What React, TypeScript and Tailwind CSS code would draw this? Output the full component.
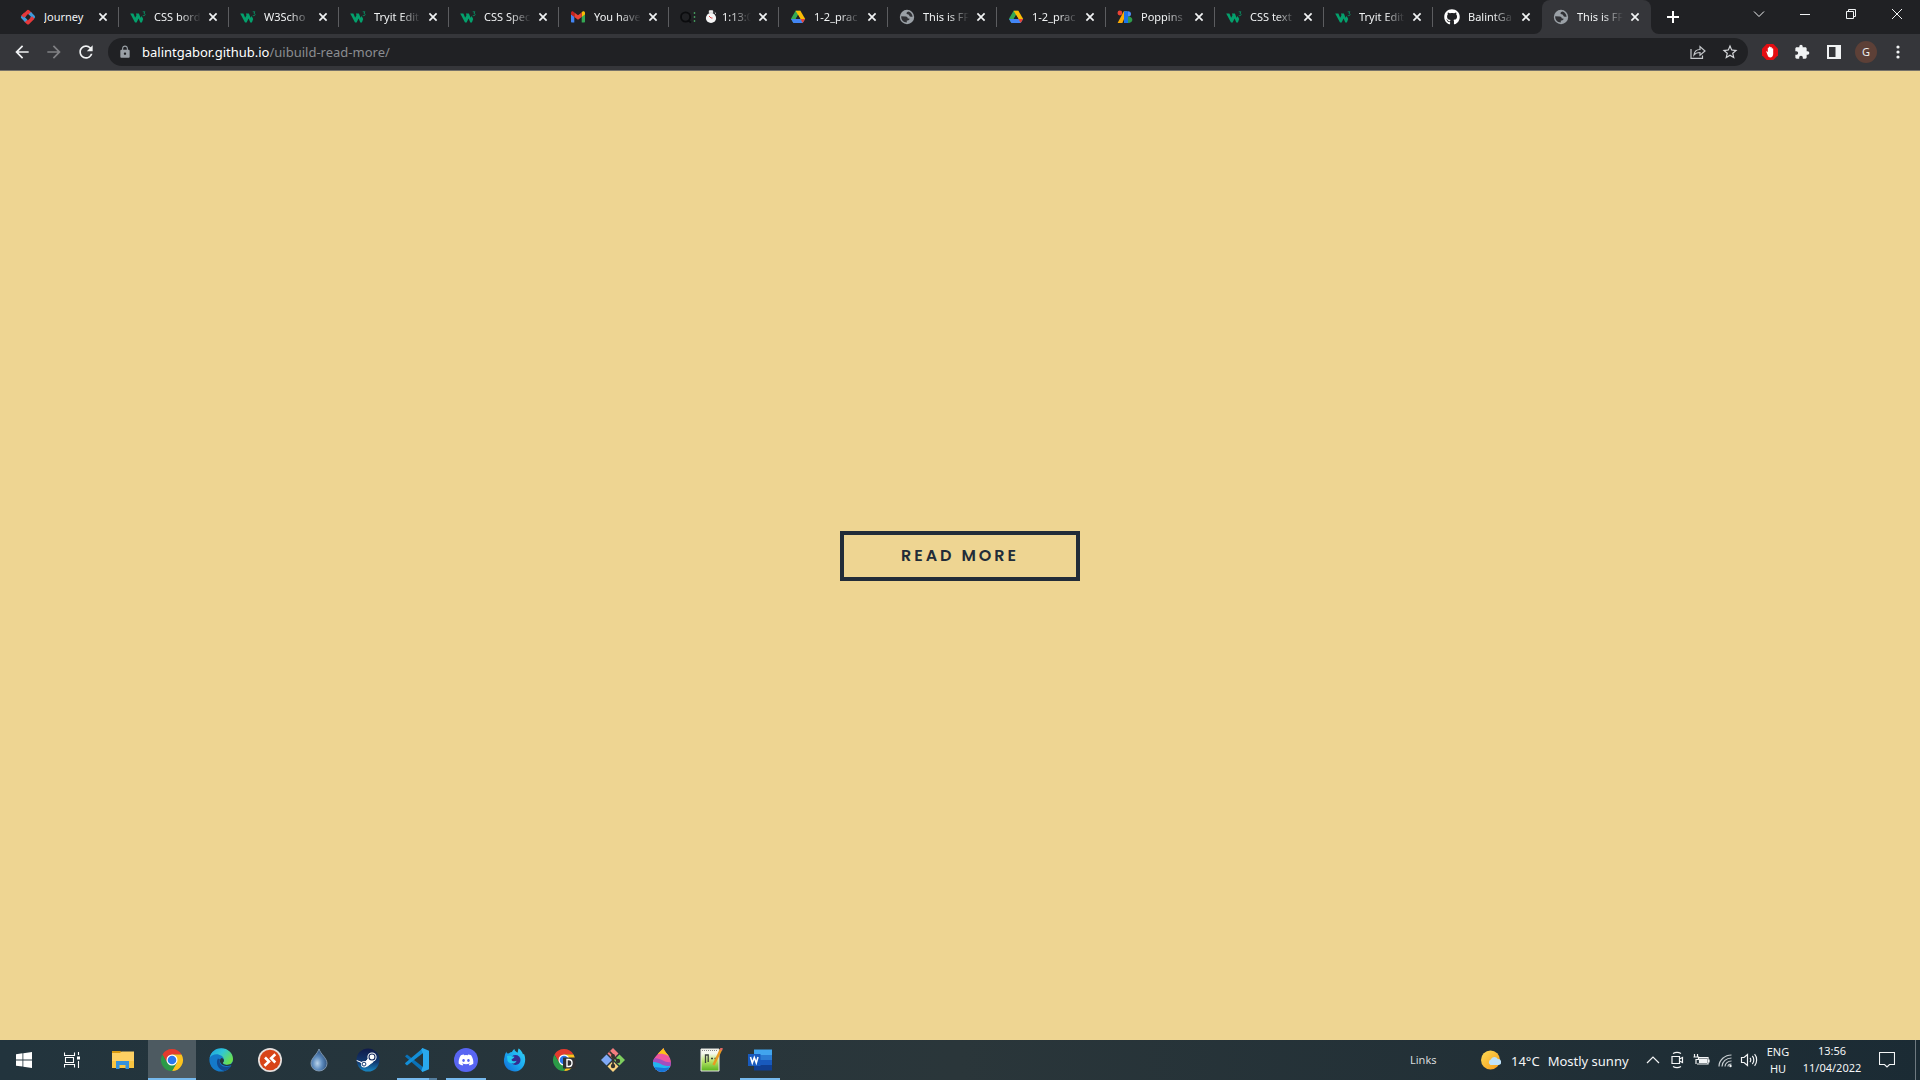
import type { ReactNode } from 'react';
import { FaDiscord, FaGithub } from 'react-icons/fa';
import { MdArrowBack, MdArrowForward, MdExtension, MdLock, MdRefresh, MdStarOutline } from 'react-icons/md';

const W3 = () => (
  <svg viewBox="0 0 16 16" className="h-4 w-4">
    <path d="M.2 4.4h3.2l1.8 4.4 1.3-2.6-.6-1.8h3l1.7 4.4 1.1-1.7 1.5 3-1.3 3.3h-1.6L8.6 9.5l-2 3.9H5z" fill="#04a06c" />
    <path d="M12.7 2.8h2.3l-1.1 1.5c1.7.2 1.6 2.4-.1 2.4-.6 0-1-.2-1.2-.6" fill="none" stroke="#0a8a60" strokeWidth=".9" />
  </svg>
);

const Journey = () => (
  <svg viewBox="0 0 16 16" className="h-4 w-4" fill="none" strokeWidth="3.4" strokeLinejoin="round">
    <path d="M2.6 8 8 2.600l2.600 2.400" stroke="#e5383b" />
    <path d="M9.800 4.100l3.600 3.800-2 2" stroke="#3c9bdc" />
    <path d="M13.300 8.500 8 13.800l-2.600-2.400" stroke="#e5383b" />
    <path d="M6.200 11.900 2.600 8.100l2-2" stroke="#3c9bdc" />
    <path d="M2.600 7.600 5.500 4.700" stroke="#e5383b" />
  </svg>
);

const Gmail = () => (
  <svg viewBox="0 0 16 16" className="h-4 w-4">
    <path d="M1 4v8.6c0 .6.4 1 1 1h2.3V7.4L1 4.9z" fill="#4285f4" />
    <path d="M15 4v8.6c0 .6-.4 1-1 1h-2.3V7.4L15 4.9z" fill="#34a853" />
    <path d="M11.7 3.6V8L15 5.5V4c0-1.5-1.6-2.2-2.7-1.3z" fill="#fbbc04" />
    <path d="M4.3 8V3.4L8 6.2l3.7-2.8V8L8 10.8z" fill="#ea4335" />
    <path d="M1 4v1.5L4.3 8V3.4l-.9-.7C2.4 1.8 1 2.6 1 4z" fill="#c5221f" />
  </svg>
);

const Timer = () => (
  <svg viewBox="0 0 16 16" className="h-4 w-4">
    <circle cx="5.6" cy="8" r="4.6" fill="none" stroke="#0b0c0e" strokeWidth="1.8" />
    <path d="M8 11.5l3 2" stroke="#0b0c0e" strokeWidth="1.6" />
    <path d="M14.5 3v2M14.5 7v2M14.5 11v2" stroke="#43945a" strokeWidth="1.4" />
  </svg>
);

const Stopwatch = () => (
  <svg viewBox="0 0 14 14" className="h-3.5 w-3.5 shrink-0">
    <path d="M5.3.8h3.4v2H5.3zM10.8 2.5l1.2 1.2" fill="#eee" stroke="#eee" />
    <circle cx="7" cy="8" r="5.1" fill="#f5f5f5" />
    <path d="M7 8 5 6M7 8h1.5" stroke="#d33" strokeWidth=".9" />
  </svg>
);

const Drive = () => (
  <svg viewBox="0 0 16 16" className="h-4 w-4">
    <path d="M5.6 1.8h4.8L8 6 3.4 14 1 9.8z" fill="#34a853" />
    <path d="M5.6 1.8h4.8l4.8 8.2h-4.7z" fill="#fbbc04" />
    <path d="M3.4 14 1 9.9h14.1L12.7 14z" fill="#4285f4" />
    <path d="M12.7 14 15.1 9.9h-4.7z" fill="#ea4335" />
    <path d="M8 6.2 5.8 9.9h4.4z" fill="#202124" />
  </svg>
);

const GoogleFonts = () => (
  <svg viewBox="0 0 16 16" className="h-4 w-4">
    <circle cx="2.9" cy="4" r="2.4" fill="#ea4335" />
    <path d="M.6 14 6.8 2.2h3.4L5.4 14z" fill="#fbab05" />
    <path d="M7 2.2h4V14H7z" fill="#1a73e8" />
    <path d="M11 2.2c4 0 4 5.6 0 5.6z" fill="#4e8df5" />
    <path d="M11 7.4c5.8 0 5.8 6.6 0 6.6z" fill="#2f9c4c" />
  </svg>
);

const Globe = () => (
  <svg viewBox="0 0 16 16" className="h-4 w-4">
    <circle cx="8" cy="8" r="7.200" fill="#9aa0a6" />
    <path d="M2.200 7.300l4.600.2c1.400.1 2 1 2 2h1.600c.4 1.400-1 2-2.600 2.100v1.900c-3.400 0-5.800-2.700-5.600-6.200z" fill="#303135" />
    <path d="M9.500 2.400c-2 .6-2.400 1.700-1.600 2.600 1 .4 2 .2 2.400 1.400.3 1.400 1.900 1.500 3.300 1.300-.2-2.500-1.700-4.500-4.100-5.300z" fill="#303135" />
  </svg>
);
const Github = () => <FaGithub className="h-4 w-4 text-white" />;

const Cross = () => (
  <svg viewBox="0 0 10 10" className="h-2.5 w-2.5">
    <path d="M1.4 1.4l7.2 7.2M8.6 1.4L1.4 8.6" stroke="#f1f3f4" strokeWidth="1.7" />
  </svg>
);

type TabData = { title: string; icon: ReactNode; wide?: boolean; timer?: boolean; active?: boolean };

const tabs: TabData[] = [
  { title: 'Journey', icon: <Journey />, wide: true },
  { title: 'CSS bord', icon: <W3 />, wide: true },
  { title: 'W3Scho', icon: <W3 />, wide: true },
  { title: 'Tryit Edit', icon: <W3 />, wide: true },
  { title: 'CSS Spec', icon: <W3 />, wide: true },
  { title: 'You have', icon: <Gmail />, wide: true },
  { title: '1:13:0', icon: <Timer />, wide: true, timer: true },
  { title: '1-2_prac', icon: <Drive /> },
  { title: 'This is FF', icon: <Globe /> },
  { title: '1-2_prac', icon: <Drive /> },
  { title: 'Poppins', icon: <GoogleFonts /> },
  { title: 'CSS text', icon: <W3 /> },
  { title: 'Tryit Edit', icon: <W3 /> },
  { title: 'BalintGa', icon: <Github /> },
  { title: 'This is FF', icon: <Globe />, active: true },
];

const Flare = ({ side }: { side: 'left' | 'right' }) => (
  <svg viewBox="0 0 8 8" className={side === 'left' ? 'absolute bottom-0 -left-2 h-2 w-2' : 'absolute -right-2 bottom-0 h-2 w-2'}>
    <path d={side === 'left' ? 'M8 0v8H0a8 8 0 0 0 8-8z' : 'M0 0v8h8a8 8 0 0 1-8-8z'} fill="#35363a" />
  </svg>
);

const Tab = ({ tab, last }: { tab: TabData; last: boolean }) => (
  <div
    className={`relative flex h-full items-center pl-[11px] ${tab.wide ? 'w-[110px]' : 'w-[109px]'} ${tab.active ? 'rounded-t-lg bg-[#35363a]' : ''}`}
  >
    {tab.active && <Flare side="left" />}
    <button className="flex min-w-0 flex-1 items-center gap-2 text-left">
      <span className="shrink-0">{tab.icon}</span>
      <span
        className={`flex min-w-0 flex-1 items-center gap-1 overflow-hidden text-[11px] leading-4 whitespace-nowrap text-[#f1f3f4] ${
          tab.title === 'Journey' ? '' : '[mask-image:linear-gradient(to_right,black_55%,transparent)]'
        }`}
      >
        {tab.timer && <Stopwatch />}
        {tab.title}
      </span>
    </button>
    <button
      aria-label={`Close ${tab.title}`}
      className={`ml-1 flex h-4 w-4 shrink-0 items-center justify-center ${tab.active || last ? 'mr-2' : 'mr-[7px]'}`}
    >
      <Cross />
    </button>
    {!tab.active && !last && <span className="h-5 w-px shrink-0 bg-[#5c5d60]" />}
    {tab.active && <Flare side="right" />}
  </div>
);

const WindowButton = ({ label, d }: { label: string; d: string }) => (
  <button aria-label={label} className="flex h-7 w-[46px] items-center justify-center">
    <svg viewBox="0 0 12 12" className="h-3 w-3" fill="none" stroke="#f1f3f4">
      <path d={d} />
    </svg>
  </button>
);

const ToolButton = ({ label, children }: { label: string; children: ReactNode }) => (
  <button aria-label={label} className="flex h-7 w-8 items-center justify-center text-[#f1f3f4]">
    {children}
  </button>
);

const Toolbar = () => (
  <div className="flex h-[37px] items-center gap-1.5 border-b border-[#77736a] bg-[#35363a] px-1.5">
    <nav className="flex" aria-label="Navigation">
      <ToolButton label="Back"><MdArrowBack className="h-5 w-5" /></ToolButton>
      <ToolButton label="Forward"><MdArrowForward className="h-5 w-5 text-[#808184]" /></ToolButton>
      <ToolButton label="Reload"><MdRefresh className="h-5 w-5" /></ToolButton>
    </nav>
    <div className="flex h-7 flex-1 items-center rounded-full bg-[#202124] pr-0.5 pl-2.5">
      <MdLock className="mr-2.5 h-3.5 w-3.5 text-[#9aa0a6]" />
      <a href="#address" className="flex-1 text-[13px] leading-5 text-[#8b8d91]">
        <span className="text-white">balintgabor.github.io</span>/uibuild-read-more/
      </a>
      <ToolButton label="Share">
        <svg viewBox="0 0 16 16" className="h-4 w-4" fill="none" stroke="#c4c7ca" strokeWidth="1.2">
          <path d="M1 5v9.4h11.5v-3M4 11c.4-3.8 2.600-5.500 6-5.500V2.500L15 7l-5 4.300V8.500C7.500 8.500 5.500 9 4 11z" />
        </svg>
      </ToolButton>
      <ToolButton label="Bookmark"><MdStarOutline className="h-[18px] w-[18px] text-[#d5d7da]" /></ToolButton>
    </div>
    <div className="flex">
      <ToolButton label="AdBlock">
        <svg viewBox="0 0 16 16" className="h-4 w-4">
          <path d="M4.700 0h6.600L16 4.700v6.600L11.300 16H4.700L0 11.300V4.700z" fill="#e40d12" />
          <path d="M4.200 7.500c.7-.6 1.300.6 1.600 1V4c0-.8 1.100-.8 1.200 0V3c0-.8 1.300-.8 1.400 0v.6c0-.8 1.300-.8 1.400 0v1.200c0-.8 1.300-.8 1.400 0V10c0 2-1.200 3.400-3 3.400-2.300 0-2.600-2.500-4-5.900z" fill="#fff" />
        </svg>
      </ToolButton>
      <ToolButton label="Extensions"><MdExtension className="h-4 w-4" /></ToolButton>
      <ToolButton label="Side panel">
        <svg viewBox="0 0 14 14" className="h-3.5 w-3.5">
          <path d="M0 0h14v14H0zM2 2v10h6.500V2z" fill="#f1f3f4" fillRule="evenodd" />
        </svg>
      </ToolButton>
      <ToolButton label="Profile">
        <span className="flex h-[22px] w-[22px] items-center justify-center rounded-full bg-[#5d4037] text-[11px] text-[#eee]">G</span>
      </ToolButton>
      <ToolButton label="Menu">
        <svg viewBox="0 0 4 14" className="h-3.5 w-1" fill="#f1f3f4">
          <circle cx="2" cy="2" r="1.600" /><circle cx="2" cy="7" r="1.600" /><circle cx="2" cy="12" r="1.600" />
        </svg>
      </ToolButton>
    </div>
  </div>
);

const Chrome = () => (
  <>
    <path d="M2.470 6.500A11 11 0 0 1 21.530 6.500H12L7.240 14.750z" fill="#e33b2e" />
    <path d="M21.530 6.500A11 11 0 0 1 12 23l4.760-8.250L12 6.500z" fill="#fcc31e" />
    <path d="M12 23A11 11 0 0 1 2.470 6.500l4.770 8.250h9.520z" fill="#2b9a47" />
    <circle cx="12" cy="12" r="5.500" fill="#fff" />
    <circle cx="12" cy="12" r="4.300" fill="#2a78ee" />
  </>
);

type AppEntry = { name: string; art: ReactNode; state?: 'active' | 'open' | 'multi' };

const apps: AppEntry[] = [
  {
    name: 'File Explorer',
    art: (
      <>
        <path d="M1 3h8.500l1.500 2H1z" fill="#d99a10" />
        <path d="M1 5h8l1.500-1.500H23V20H1z" fill="#fdd063" />
        <path d="M1 13h22v7H1z" fill="#f9c440" />
        <path d="M5 13h13v8h-3.500v-4h-6v4H5z" fill="#3391dd" />
      </>
    ),
  },
  { name: 'Chrome', art: <Chrome />, state: 'active' },
  {
    name: 'Edge',
    art: (
      <>
        <defs>
          <linearGradient id="edgeTop" x1="0" y1="0" x2="1" y2=".6">
            <stop offset="0" stopColor="#1ba0e0" /><stop offset=".5" stopColor="#30c6d6" /><stop offset="1" stopColor="#6be04b" />
          </linearGradient>
        </defs>
        <circle cx="12" cy="12" r="11.600" fill="#1479c9" />
        <path d="M.6 10C2 3.500 7 .3 12.300.3 19 .3 24 5.300 24 11c0 3.500-2.500 5.800-5.800 5.800-2.600 0-4.300-.9-4.300-2 0-.7 1-1 1-2.800C14.900 8.500 11 6.300 7.500 6.300 4.500 6.300 2 7.600.6 10z" fill="url(#edgeTop)" />
        <path d="M9 10.500c-2.600 3.500-.5 11.500 6.500 12.500 3.400-.9 5.400-2.800 6.800-5.200-4 2.200-11.700 1.300-11.700-4.300 0-1.200.5-2 .5-2z" fill="#12498f" />
        <path d="M23.800 16.500c-3 2.500-12.900 2-12.900-3.800 0-1.500 1.300-2.600 2-2.700 1.600.6 2.200 1.500 2 3-.1 1-1 1.300-1 2 0 1.300 3 2.500 6 1.600 2-.5 3.500-1.600 4.200-2.600z" fill="#24343c" />
      </>
    ),
  },
  {
    name: 'Remote Desktop',
    art: (
      <>
        <circle cx="12" cy="12" r="12" fill="#e6e1df" />
        <circle cx="12" cy="12" r="10.300" fill="#d84417" />
        <path d="M7 9.500l4 4-4.500 4.300M17.300 14.500l-4.200-4.300 4.200-4" fill="none" stroke="#fff" strokeWidth="2.600" />
      </>
    ),
  },
  {
    name: 'Deluge',
    art: (
      <>
        <defs>
          <radialGradient id="drop" cx=".4" cy=".65" r=".6">
            <stop offset="0" stopColor="#b9d3ea" /><stop offset=".5" stopColor="#5d8bbd" /><stop offset="1" stopColor="#2e527f" />
          </radialGradient>
        </defs>
        <path d="M12 1c1.500 5 8 9 8 14.500a8 7.500 0 0 1-16 0C4 10 10.500 6 12 1z" fill="url(#drop)" stroke="#8fa6bd" strokeWidth=".8" />
      </>
    ),
  },
  {
    name: 'Steam',
    art: (
      <>
        <defs>
          <linearGradient id="steam" x1="0" y1="0" x2="0" y2="1">
            <stop offset="0" stopColor="#101a4a" /><stop offset=".6" stopColor="#123a70" /><stop offset="1" stopColor="#1888c4" />
          </linearGradient>
        </defs>
        <circle cx="12" cy="12" r="11.500" fill="url(#steam)" />
        <path d="M.7 12.500l7.500 3 5-6 4 4.200-6 4.500" fill="#fff" stroke="#fff" />
        <circle cx="8.300" cy="16.300" r="3.300" fill="#fff" />
        <circle cx="8" cy="16.100" r="1.900" fill="none" stroke="#143b70" />
        <circle cx="16" cy="9" r="4.600" fill="#fff" />
        <circle cx="16" cy="9" r="3" fill="#fff" stroke="#15295c" strokeWidth="1.100" />
      </>
    ),
  },
  {
    name: 'Visual Studio Code',
    state: 'multi',
    art: (
      <>
        <path d="M0 8.300l2-1.800L18 19v5L1 9.300z" fill="#0a72b8" />
        <path d="M0 15.700l2 1.800L18 5V0L.5 14.700z" fill="#138fd8" />
        <path d="M17.500 0L24 2.800v18.400L17.500 24l-1.200-1.200L18 18V6l-1.700-4.800z" fill="#29a9ee" />
      </>
    ),
  },
  {
    name: 'Discord',
    state: 'open',
    art: (
      <>
        <circle cx="12" cy="12" r="12" fill="#5865f2" />
        <FaDiscord x="4" y="4" width="16" height="16" color="#fff" />
      </>
    ),
  },
  {
    name: 'Firefox Developer Edition',
    art: (
      <>
        <defs>
          <linearGradient id="fox" x1="1" y1="0" x2="0" y2="1">
            <stop offset="0" stopColor="#35d6f5" /><stop offset=".5" stopColor="#1aa7f0" /><stop offset="1" stopColor="#1169d5" />
          </linearGradient>
        </defs>
        <path d="M3.500 3.500c0 2 .7 2.200 2.500 1.800C7 4.500 8 4 9 4c.5-1.500 1.500-2.500 2.500-3 0 1.800 1 2.500 3 3.700C15 3.500 15 1.500 15.500.5 17 1 19.500 4 20 6.500l1-.8C24.500 14 20 23.500 12 23.500 5 23.500-1 17 1.500 9c.3-2 1-4 2-5.500z" fill="url(#fox)" />
        <circle cx="12.500" cy="12" r="5" fill="#342b91" />
        <path d="M4 8c3-.5 5 .5 7.500.8-.5 1.800-2.600 1.600-3 3 .6 1.800 3 1.900 5 .9-.5 3.500-7 4-9 .100z" fill="#22c8ef" />
      </>
    ),
  },
  {
    name: 'Chrome profile D',
    art: (
      <>
        <Chrome />
        <rect x="11" y="9.500" width="12.500" height="11" fill="#303134" />
        <path d="M15 11.500h1.800c4.300 0 4.300 7 0 7H15z" fill="none" stroke="#fff" strokeWidth="1.400" />
      </>
    ),
  },
  {
    name: 'Git',
    art: (
      <>
        <path d="M12 0l5.500 5.500L12 11 6.500 5.500z" fill="#f47d7f" />
        <path d="M18.500 6.500L24 12l-5.500 5.500L13 12z" fill="#7fcf5f" />
        <path d="M5.500 6.500L11 12l-5.500 5.500L0 12z" fill="#7fa9f5" />
        <path d="M12 13l5.500 5.500L12 24l-5.500-5.500z" fill="#fbd481" />
        <path d="M8.500 3.500L12 7v11M12 8l4.500 4.500" fill="none" stroke="#34332f" strokeWidth="1.700" />
        <circle cx="12" cy="8" r="2" fill="#34332f" /><circle cx="12" cy="18" r="2.200" fill="#34332f" /><circle cx="17" cy="13" r="2.200" fill="#34332f" />
      </>
    ),
  },
  {
    name: 'Paint 3D',
    art: (
      <>
        <defs>
          <clipPath id="paint"><path d="M13.500 0c1 4.500 7.500 8 7.500 15a9 9 0 0 1-18 0C3 9 9.500 5 13.500 0z" /></clipPath>
        </defs>
        <g clipPath="url(#paint)">
          <path d="M0 0h24v24H0z" fill="#f0569f" />
          <path d="M8 0h14v9c-4 0-6-4-14-3z" fill="#fcc319" />
          <path d="M2 11c8-3 12 5 20 3v10H2z" fill="#a04fc0" />
          <path d="M2 14c8-1 9 5 20 4v7H2z" fill="#21b6f0" />
          <path d="M2 19c8 0 9 2 20 0v5H2z" fill="#1776d8" />
        </g>
      </>
    ),
  },
  {
    name: 'Notepad++',
    art: (
      <>
        <defs>
          <linearGradient id="note" x1="0" y1="0" x2="0" y2="1">
            <stop offset=".2" stopColor="#f6f8ef" /><stop offset=".55" stopColor="#b9e46a" /><stop offset="1" stopColor="#58b31b" />
          </linearGradient>
        </defs>
        <path d="M2 1h18v22H2z" fill="url(#note)" stroke="#e5e5e0" />
        <path d="M3 2.500h16" stroke="#888" strokeDasharray="1 1" />
        <path d="M6.500 15V7h2.700v7M12 10.500h2M15.500 10.500h2" fill="none" stroke="#3a423a" strokeWidth="1.300" />
        <path d="M22 1.500L14.500 17" stroke="#e99a21" strokeWidth="2.600" />
        <path d="M22.800 0l-1 2.300" stroke="#e36b62" strokeWidth="2.600" />
      </>
    ),
  },
  {
    name: 'Word',
    state: 'open',
    art: (
      <>
        <path d="M6 1.500h18V7H6z" fill="#41a5ee" />
        <path d="M6 7h18v5H6z" fill="#2b7cd3" />
        <path d="M6 12h18v5H6z" fill="#185abd" />
        <path d="M6 17h18v5.500H6z" fill="#103f91" />
        <path d="M0 6h12.500v12H0z" fill="#185abd" />
        <path d="M2.500 9l1.800 6 2-5.500 2 5.500L10 9" fill="none" stroke="#fff" strokeWidth="1.500" />
      </>
    ),
  },
];

const TaskButton = ({ app }: { app: AppEntry }) => (
  <button aria-label={app.name} className={`flex h-10 w-12 flex-col items-center ${app.state === 'active' ? 'bg-[#4d5a61]' : ''}`}>
    <span className="flex flex-1 items-center pt-0.5">
      <svg viewBox="0 0 24 24" className="h-6 w-6">{app.art}</svg>
    </span>
    <span className={`flex h-0.5 ${app.state === 'active' ? 'w-12' : 'w-10'} ${app.state ? 'bg-[#76b9ed]' : ''}`}>
      {app.state === 'multi' && <span className="ml-auto h-full w-2 bg-[#557f9f]" />}
    </span>
  </button>
);

const TrayIcon = ({ label, children }: { label: string; children: ReactNode }) => (
  <button aria-label={label} className="flex w-6 items-center justify-center">
    <svg viewBox="0 0 18 18" className="h-[18px] w-[18px]" fill="none" stroke="#f3f5f6" strokeWidth="1.200">{children}</svg>
  </button>
);

const Taskbar = () => (
  <footer className="flex h-10 bg-linear-to-r from-[#22343d] via-[#2a363a] via-50% to-[#1b2b34] text-[#f3f5f6]">
    <button aria-label="Start" className="flex w-12 items-center justify-center">
      <svg viewBox="0 0 16 16" className="h-4 w-4" fill="#fff">
        <path d="M0 2.200l6.500-.9v6.200H0zM7.300 1.200L16 0v7.500H7.300zM0 8.400h6.500v6.200L0 13.700zM7.300 8.400H16V16l-8.700-1.200z" />
      </svg>
    </button>
    <button aria-label="Task view" className="mr-[3px] flex w-12 items-center justify-center">
      <svg viewBox="0 0 16 16" className="h-4 w-4" fill="none" stroke="#fff" strokeWidth="1.100">
        <path d="M.5.500v3h10v-3M.5 15.500v-3h10v3M1.500 5.500h8v5h-8zM14.500 0v3M14.500 9v7" />
        <path d="M13 4.500h3v3h-3z" fill="#fff" stroke="none" />
      </svg>
    </button>
    <div className="flex gap-px">
      {apps.map((app) => <TaskButton key={app.name} app={app} />)}
    </div>
    <div className="ml-auto flex">
      <button className="w-[71px] text-left text-[11px] text-[#d7dadb]">Links</button>
      <button className="flex w-40 items-center gap-2.5 text-[13px] leading-5 whitespace-nowrap">
        <svg viewBox="0 0 20 20" className="h-5 w-5 shrink-0">
          <defs>
            <linearGradient id="sun" x1="0" y1="0" x2="1" y2="1"><stop stopColor="#fddc57" /><stop offset="1" stopColor="#f79a18" /></linearGradient>
          </defs>
          <circle cx="9.500" cy="10" r="9.500" fill="url(#sun)" />
          <path d="M9.500 15a3 3 0 0 1 .3-5.500 3.800 3.800 0 0 1 7-.5 3 3 0 0 1 .7 6z" fill="#bfe2fa" />
        </svg>
        <span className="flex gap-2 pt-0.5"><span>14°C</span><span>Mostly sunny</span></span>
      </button>
      <TrayIcon label="Show hidden icons"><path d="M3 12l6-6 6 6" /></TrayIcon>
      <TrayIcon label="Meet now">
        <path d="M5 2.500c2.500-1.500 5.500-1.500 8 0M5 15.500c2.500 1.500 5.500 1.500 8 0M4 5.500h7.500v7H4zM11.500 8l3-1.500v5l-3-1.500" />
      </TrayIcon>
      <TrayIcon label="Battery">
        <path d="M6 6.500h10v6.500H5M17 8.500v3M2.500 3v3M5.500 3v3M1.500 6h5v2.500H4V13" />
        <path d="M7.500 8h7v3.500h-7z" fill="#f3f5f6" />
      </TrayIcon>
      <TrayIcon label="Wi-Fi">
        <path d="M3 15.500C3 9 9 4 15.500 4M6 15.500c0-5 4.500-8.500 9.500-8.500M9 15.500c0-3 3-5.500 6.500-5.500M12 15.500c0-1.500 1.500-2.500 3.500-2.500" stroke="#c9cfd2" />
        <circle cx="14.500" cy="15" r="1.200" fill="#f3f5f6" stroke="none" />
      </TrayIcon>
      <TrayIcon label="Volume">
        <path d="M1.500 6.500v5h2.500l3.500 3V3.500L4 6.500zM10 7c1 1 1 3 0 4M12.300 5c2 2 2 6 0 8M14.600 3.200c2.700 3 2.700 8.600 0 11.600" />
      </TrayIcon>
      <button className="flex w-[34px] flex-col items-center justify-center text-[11px] leading-[17px]"><span>ENG</span><span>HU</span></button>
      <button className="flex w-[74px] flex-col items-center justify-center pb-0.5 text-[11px] leading-[17px] whitespace-nowrap">
        <span>13:56</span><span>11/04/2022</span>
      </button>
      <button aria-label="Notifications" className="mr-4 ml-1.5 flex w-6 items-center justify-center">
        <svg viewBox="0 0 16 16" className="h-4 w-4" fill="none" stroke="#f3f5f6" strokeWidth="1.100">
          <path d="M.5.500h15v12H10.500L8 15l-2.500-2.500h-5z" />
        </svg>
      </button>
      <button aria-label="Show desktop" className="w-[5px] border-l border-[#6e7980]" />
    </div>
  </footer>
);

export default function App() {
  return (
    <div className="flex min-h-screen flex-col font-['Noto_Sans','Open_Sans',sans-serif]">
      <header>
        <div className="flex h-[34px] bg-[#202124] pl-[9px]">
          {tabs.map((tab, i) => <Tab key={i} tab={tab} last={i === tabs.length - 2} />)}
          <button aria-label="New tab" className="ml-2 flex w-7 items-center justify-center">
            <svg viewBox="0 0 12 12" className="h-3 w-3"><path d="M6 0v12M0 6h12" stroke="#fff" strokeWidth="2" /></svg>
          </button>
          <div className="ml-auto flex">
            <WindowButton label="Search tabs" d="M1 3.500l5 5 5-5" />
            <WindowButton label="Minimize" d="M1 6.500h10" />
            <WindowButton label="Restore" d="M1.500 3.500h7v7h-7zM3.500 3.500v-2h7v7h-2" />
            <WindowButton label="Close window" d="M1 1l10 10M11 1L1 11" />
          </div>
        </div>
        <Toolbar />
      </header>
      <main className="flex flex-1 items-center justify-center bg-[#eed592]">
        <button className="h-[50px] w-60 border-4 border-[#222c38] font-['Poppins','Inter',sans-serif] text-[16px] font-semibold tracking-[3px] text-[#222c38]">
          READ MORE
        </button>
      </main>
      <Taskbar />
    </div>
  );
}
